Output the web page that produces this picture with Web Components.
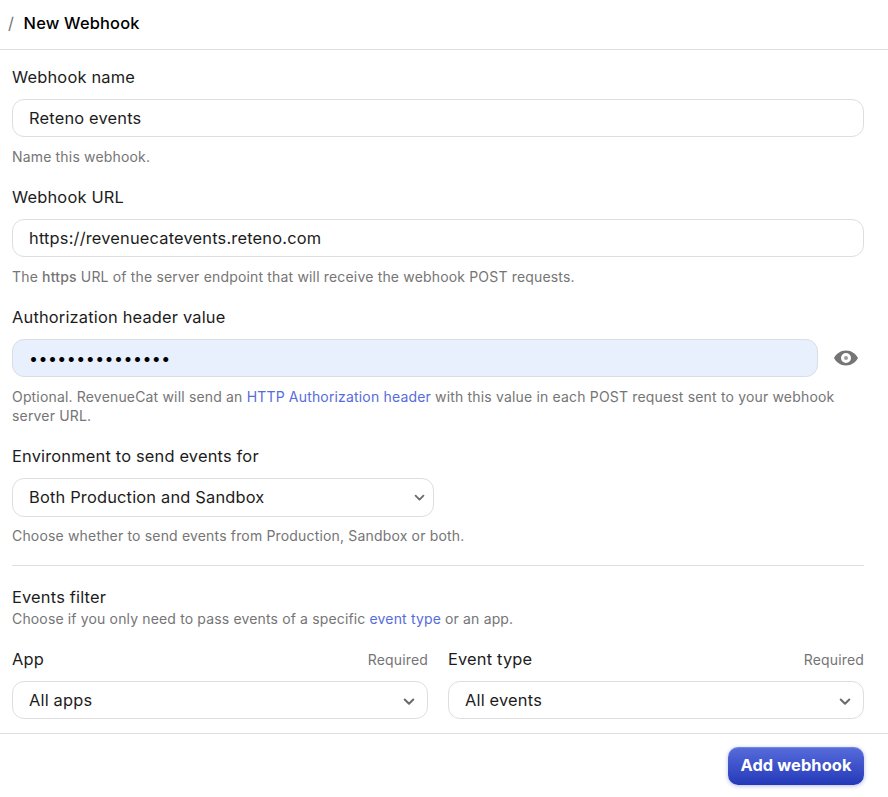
<!DOCTYPE html>
<html lang="en">
<head>
<meta charset="utf-8">
<title>New Webhook</title>
<style>
   body {
      margin: 0;
      background: #fff;
      color: #1c1c1c;
      font: 400 16.4px/24px Inter, "Liberation Sans", sans-serif;
      letter-spacing: .19px;
   }

   a {
      color: #576cdb;
      text-decoration: none;
   }

   b {
      font-weight: 500;
   }
</style>
</head>
<body>

<webhook-page>
   <page-header slot="header">New Webhook</page-header>

   <form-field label="Webhook name">
      <text-box>Reteno events</text-box>
      <span slot="hint">Name this webhook.</span>
   </form-field>

   <form-field label="Webhook URL">
      <text-box>https://revenuecatevents.reteno.com</text-box>
      <span slot="hint">The <b>https</b> URL of the server endpoint that will receive the webhook POST requests.</span>
   </form-field>

   <form-field label="Authorization header value">
      <secret-box>•••••••••••••••</secret-box>
      <span slot="hint">Optional. RevenueCat will send an <a href="#">HTTP Authorization header</a> with this value in each POST request sent to your webhook server URL.</span>
   </form-field>

   <form-field class="compact" label="Environment to send events for">
      <select-box class="short">Both Production and Sandbox</select-box>
      <span slot="hint">Choose whether to send events from Production, Sandbox or both.</span>
   </form-field>

   <filter-section>
      <span slot="title">Events filter</span>
      <span slot="hint">Choose if you only need to pass events of a specific <a href="#">event type</a> or an app.</span>
      <form-field label="App" required>
         <select-box>All apps</select-box>
      </form-field>
      <form-field label="Event type" required>
         <select-box>All events</select-box>
      </form-field>
   </filter-section>

   <primary-button slot="footer">Add webhook</primary-button>
</webhook-page>

<script>
   class BaseElement extends HTMLElement {

      constructor() {
         super()
         this.attachShadow({ mode: 'open' })
      }

      connectedCallback() {
         const template = document.createElement("template")
         template.innerHTML = this.getTemplate() + this.getStyles()
         this.shadowRoot.replaceChildren(template.content.cloneNode(true))
      }

   }

   class WebhookPage extends BaseElement {

      getTemplate() {
         return /*html*/`
            <slot name="header"></slot>
            <main><slot></slot></main>
            <footer><slot name="footer"></slot></footer>
         `
      }

      getStyles() {
         return /*html*/`
            <style>
               :host {
                  display: flex;
                  flex-direction: column;
                  height: 797px;
                  overflow: hidden;
               }

               main {
                  display: flex;
                  flex-direction: column;
                  gap: 19px;
                  flex: 1;
                  padding: 15px 24px 0 12px;
               }

               footer {
                  display: flex;
                  justify-content: flex-end;
                  box-sizing: border-box;
                  height: 64px;
                  padding: 13px 24px 0;
                  border-top: 1px solid #dedede;
               }
            </style>
         `
      }

   }

   class PageHeader extends BaseElement {

      getTemplate() {
         return /*html*/`
            <span class="slash">/</span>
            <h1><slot></slot></h1>
         `
      }

      getStyles() {
         return /*html*/`
            <style>
               :host {
                  display: flex;
                  gap: 9.5px;
                  box-sizing: border-box;
                  height: 50px;
                  padding: 11px 8px 0;
                  border-bottom: 1px solid #dedede;
               }

               .slash {
                  color: #757575;
               }

               h1 {
                  margin: 0;
                  color: #000;
                  font-size: inherit;
                  font-weight: 500;
               }
            </style>
         `
      }

   }

   class FormField extends BaseElement {

      getTemplate() {
         const required = this.hasAttribute("required") ? `<span class="required">Required</span>` : ""
         const hint = this.querySelector("[slot=hint]") ? `<div class="hint"><slot name="hint"></slot></div>` : ""

         return /*html*/`
            <div class="top"><span>${this.getAttribute("label")}</span>${required}</div>
            <slot></slot>
            ${hint}
         `
      }

      getStyles() {
         return /*html*/`
            <style>
               :host {
                  display: flex;
                  flex-direction: column;
                  gap: 10px;
               }

               .top {
                  display: flex;
                  justify-content: space-between;
                  height: 24px;
               }

               .required {
                  color: #757575;
                  font-size: 14px;
                  line-height: 26px;
                  letter-spacing: .15px;
               }

               .hint {
                  color: #757575;
                  font-size: 14px;
                  line-height: 19px;
                  letter-spacing: .17px;
               }

               :host(.compact) .hint {
                  margin: -1px 0 1px;
               }
            </style>
         `
      }

   }

   class TextBox extends BaseElement {

      getTemplate() {
         return /*html*/`<slot></slot>`
      }

      getStyles() {
         return /*html*/`
            <style>
               :host {
                  display: block;
                  box-sizing: border-box;
                  height: 38px;
                  padding: 6px 16px;
                  border: 1px solid #dedede;
                  border-radius: 12px;
               }
            </style>
         `
      }

   }

   class SecretBox extends BaseElement {

      getTemplate() {
         return /*html*/`
            <div class="box"><slot></slot></div>
            <svg width="24" height="16" viewBox="0 0 24 16">
               <path fill="#757575" fill-rule="evenodd" d="M12 .5C6.500 .5 2.200 3.700 0 8c2.200 4.300 6.500 7.500 12 7.500S21.800 12.300 24 8C21.800 3.700 17.500 .5 12 .5zM12 3a5 5 0 1 1 0 10 5 5 0 0 1 0-10z"/>
               <circle cx="12" cy="8" r="2" fill="#757575" fill-opacity=".7"/>
            </svg>
         `
      }

      getStyles() {
         return /*html*/`
            <style>
               :host {
                  display: flex;
                  align-items: center;
                  gap: 16px;
                  padding-right: 6px;
               }

               .box {
                  flex: 1;
                  box-sizing: border-box;
                  height: 38px;
                  padding: 6px 16px;
                  border: 1px solid #dadde4;
                  border-radius: 12px;
                  background: #e8f0fe;
                  color: #000;
                  font-size: 16px;
                  letter-spacing: .45px;
               }
            </style>
         `
      }

   }

   class SelectBox extends BaseElement {

      getTemplate() {
         return /*html*/`
            <slot></slot>
            <svg width="12" height="8" viewBox="0 0 12 8">
               <path d="M1.700 1.500 6 5.800l4.300-4.300" fill="none" stroke="#6b6b6b" stroke-width="2" stroke-linecap="round" stroke-linejoin="round"/>
            </svg>
         `
      }

      getStyles() {
         return /*html*/`
            <style>
               :host {
                  display: flex;
                  align-items: center;
                  justify-content: space-between;
                  box-sizing: border-box;
                  height: 38px;
                  padding: 0 12px 0 16px;
                  border: 1px solid #dedede;
                  border-radius: 12px;
               }

               svg {
                  margin-top: 3px;
               }

               :host(.short) {
                  width: 422px;
                  height: 39px;
                  padding: 0 8px 2px 16px;
               }

               :host(.short) svg {
                  width: 11px;
                  margin-top: 2px;
               }
            </style>
         `
      }

   }

   class FilterSection extends BaseElement {

      getTemplate() {
         return /*html*/`
            <div class="title"><slot name="title"></slot></div>
            <div class="hint"><slot name="hint"></slot></div>
            <div class="grid"><slot></slot></div>
         `
      }

      getStyles() {
         return /*html*/`
            <style>
               :host {
                  display: block;
                  padding-top: 19px;
                  border-top: 1px solid #dedede;
               }

               .hint {
                  color: #757575;
                  font-size: 14px;
                  line-height: 19px;
                  letter-spacing: .15px;
               }

               .grid {
                  display: grid;
                  grid-template-columns: 1fr 1fr;
                  gap: 20px;
                  margin-top: 19px;
               }
            </style>
         `
      }

   }

   class PrimaryButton extends BaseElement {

      getTemplate() {
         return /*html*/`<button><slot></slot></button>`
      }

      getStyles() {
         return /*html*/`
            <style>
               :host {
                  display: block;
               }

               button {
                  width: 136px;
                  height: 38px;
                  padding: 0 0 2px;
                  border: 0;
                  border-radius: 10px;
                  background: linear-gradient(#576cdb, #2439b8);
                  box-shadow: 0 1px 4px rgba(36, 57, 184, .35), inset 0 1px 1px rgba(255, 255, 255, .2);
                  color: #fff;
                  font: inherit;
                  font-weight: 700;
                  letter-spacing: .1px;
               }
            </style>
         `
      }

   }

   customElements.define("webhook-page", WebhookPage)
   customElements.define("page-header", PageHeader)
   customElements.define("form-field", FormField)
   customElements.define("text-box", TextBox)
   customElements.define("secret-box", SecretBox)
   customElements.define("select-box", SelectBox)
   customElements.define("filter-section", FilterSection)
   customElements.define("primary-button", PrimaryButton)
</script>
</body>
</html>
